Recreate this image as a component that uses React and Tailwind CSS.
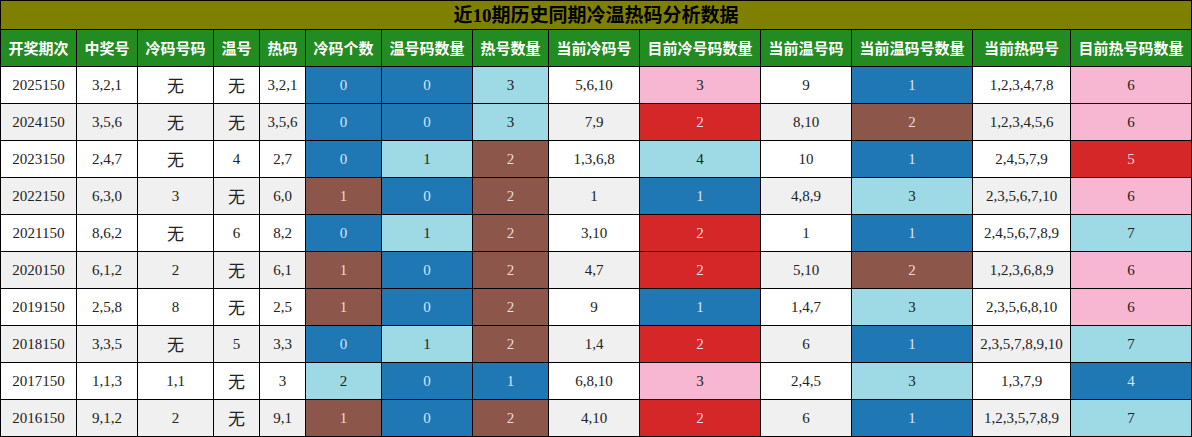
import React from 'react';

const widths = [76, 61, 76, 46, 46, 76, 91, 76, 91, 121, 91, 121, 98, 121];

const headers = [
  '开奖期次', '中奖号', '冷码号码', '温号', '热码', '冷码个数', '温号码数量',
  '热号数量', '当前冷码号', '目前冷号码数量', '当前温号码', '当前温码号数量',
  '当前热码号', '目前热号码数量',
];

// color keys: b = blue, l = light blue, r = brown, p = pink, d = red
const rows = [
  ['2025150', '3,2,1', '无', '无', '3,2,1', ['0', 'b'], ['0', 'b'], ['3', 'l'], '5,6,10', ['3', 'p'], '9', ['1', 'b'], '1,2,3,4,7,8', ['6', 'p']],
  ['2024150', '3,5,6', '无', '无', '3,5,6', ['0', 'b'], ['0', 'b'], ['3', 'l'], '7,9', ['2', 'd'], '8,10', ['2', 'r'], '1,2,3,4,5,6', ['6', 'p']],
  ['2023150', '2,4,7', '无', '4', '2,7', ['0', 'b'], ['1', 'l'], ['2', 'r'], '1,3,6,8', ['4', 'l'], '10', ['1', 'b'], '2,4,5,7,9', ['5', 'd']],
  ['2022150', '6,3,0', '3', '无', '6,0', ['1', 'r'], ['0', 'b'], ['2', 'r'], '1', ['1', 'b'], '4,8,9', ['3', 'l'], '2,3,5,6,7,10', ['6', 'p']],
  ['2021150', '8,6,2', '无', '6', '8,2', ['0', 'b'], ['1', 'l'], ['2', 'r'], '3,10', ['2', 'd'], '1', ['1', 'b'], '2,4,5,6,7,8,9', ['7', 'l']],
  ['2020150', '6,1,2', '2', '无', '6,1', ['1', 'r'], ['0', 'b'], ['2', 'r'], '4,7', ['2', 'd'], '5,10', ['2', 'r'], '1,2,3,6,8,9', ['6', 'p']],
  ['2019150', '2,5,8', '8', '无', '2,5', ['1', 'r'], ['0', 'b'], ['2', 'r'], '9', ['1', 'b'], '1,4,7', ['3', 'l'], '2,3,5,6,8,10', ['6', 'p']],
  ['2018150', '3,3,5', '无', '5', '3,3', ['0', 'b'], ['1', 'l'], ['2', 'r'], '1,4', ['2', 'd'], '6', ['1', 'b'], '2,3,5,7,8,9,10', ['7', 'l']],
  ['2017150', '1,1,3', '1,1', '无', '3', ['2', 'l'], ['0', 'b'], ['1', 'b'], '6,8,10', ['3', 'p'], '2,4,5', ['3', 'l'], '1,3,7,9', ['4', 'b']],
  ['2016150', '9,1,2', '2', '无', '9,1', ['1', 'r'], ['0', 'b'], ['2', 'r'], '4,10', ['2', 'd'], '6', ['1', 'b'], '1,2,3,5,7,8,9', ['7', 'l']],
];

const tone = {
  b: 'bg-[#1f77b4] text-[#d6e6f4]',
  l: 'bg-[#9edae5] text-[#222]',
  r: 'bg-[#8c564b] text-[#eadcd8]',
  p: 'bg-[#f7b6d2] text-[#222]',
  d: 'bg-[#d62728] text-[#f6dcdc]',
};

const Cell = ({ value, stripe }) => {
  if (Array.isArray(value)) {
    return (
      <td className={`border border-black text-center ${tone[value[1]]}`}>{value[0]}</td>
    );
  }
  const isNone = value === '无';
  return (
    <td
      className={`border border-black text-center text-[#222] ${stripe ? 'bg-[#f0f0f0]' : 'bg-white'} ${
        isNone ? "text-[17px] font-['Noto_Sans_CJK_SC',sans-serif]" : ''
      }`}
    >
      {value}
    </td>
  );
};

export default function App() {
  return (
    <div className="w-[1192px] h-[437px] bg-white overflow-hidden">
      <table className="table-fixed border-collapse w-[1192px] font-['Liberation_Serif','Noto_Sans_CJK_SC',serif] text-[15px]">
        <colgroup>
          {widths.map((w, i) => (
            <col key={i} style={{ width: w }} />
          ))}
        </colgroup>
        <thead>
          <tr className="h-[29px]">
            <th
              colSpan={14}
              className="border border-black bg-[#808000] text-black text-[19px] font-bold leading-none font-['Liberation_Serif','Noto_Sans_CJK_SC',serif]"
            >
              近10期历史同期冷温热码分析数据
            </th>
          </tr>
          <tr className="h-[37px]">
            {headers.map((h) => (
              <th
                key={h}
                className="border border-black bg-[#228b22] text-white font-bold text-[15px] whitespace-nowrap font-['Noto_Sans_CJK_SC',sans-serif]"
              >
                {h}
              </th>
            ))}
          </tr>
        </thead>
        <tbody>
          {rows.map((row, i) => (
            <tr key={row[0]} className="h-[37px]">
              {row.map((v, j) => (
                <Cell key={j} value={v} stripe={i % 2 === 1} />
              ))}
            </tr>
          ))}
        </tbody>
      </table>
    </div>
  );
}
